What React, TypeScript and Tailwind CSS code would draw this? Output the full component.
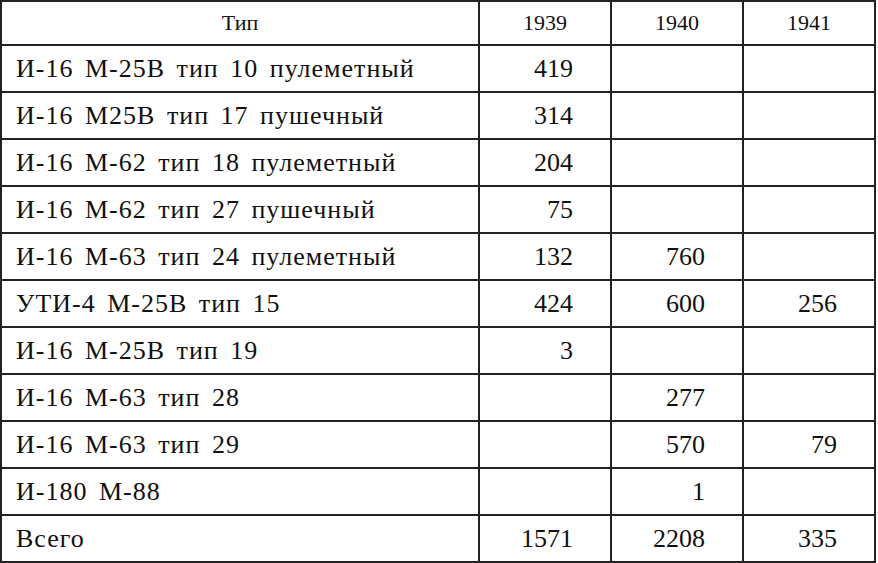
const rows: [string, string, string, string][] = [
  ['И-16 М-25В тип 10 пулеметный', '419', '', ''],
  ['И-16 М25В тип 17 пушечный', '314', '', ''],
  ['И-16 М-62 тип 18 пулеметный', '204', '', ''],
  ['И-16 М-62 тип 27 пушечный', '75', '', ''],
  ['И-16 М-63 тип 24 пулеметный', '132', '760', ''],
  ['УТИ-4 М-25В тип 15', '424', '600', '256'],
  ['И-16 М-25В тип 19', '3', '', ''],
  ['И-16 М-63 тип 28', '', '277', ''],
  ['И-16 М-63 тип 29', '', '570', '79'],
  ['И-180 М-88', '', '1', ''],
  ['Всего', '1571', '2208', '335'],
]

const years = ['1939', '1940', '1941']

export default function App() {
  return (
    <div className="w-[878px] h-[563px] bg-white text-[#111] font-['Liberation_Serif',serif]">
      <div className="w-[876px] border-t-2 border-l-2 border-[#222] grid grid-cols-[478px_132px_132px_132px] grid-rows-[44px_repeat(11,47px)]">
        {/* header */}
        <div className="border-r-2 border-b-2 border-[#222] flex items-center justify-center text-[22px] pb-[2px]">
          Тип
        </div>
        {years.map((y) => (
          <div key={y} className="border-r-2 border-b-2 border-[#222] flex items-center justify-center text-[22px] pb-[2px]">
            {y}
          </div>
        ))}

        {/* body */}
        {rows.map(([name, a, b, c]) => (
          <div key={name} className="contents">
            <div className="border-r-2 border-b-2 border-[#222] flex items-center pl-[14px] text-[26px] tracking-[1px] [word-spacing:4px]">
              {name}
            </div>
            {[a, b, c].map((v, i) => (
              <div key={i} className="border-r-2 border-b-2 border-[#222] flex items-center justify-end pr-[37px] text-[26px]">
                {v}
              </div>
            ))}
          </div>
        ))}
      </div>
    </div>
  )
}
